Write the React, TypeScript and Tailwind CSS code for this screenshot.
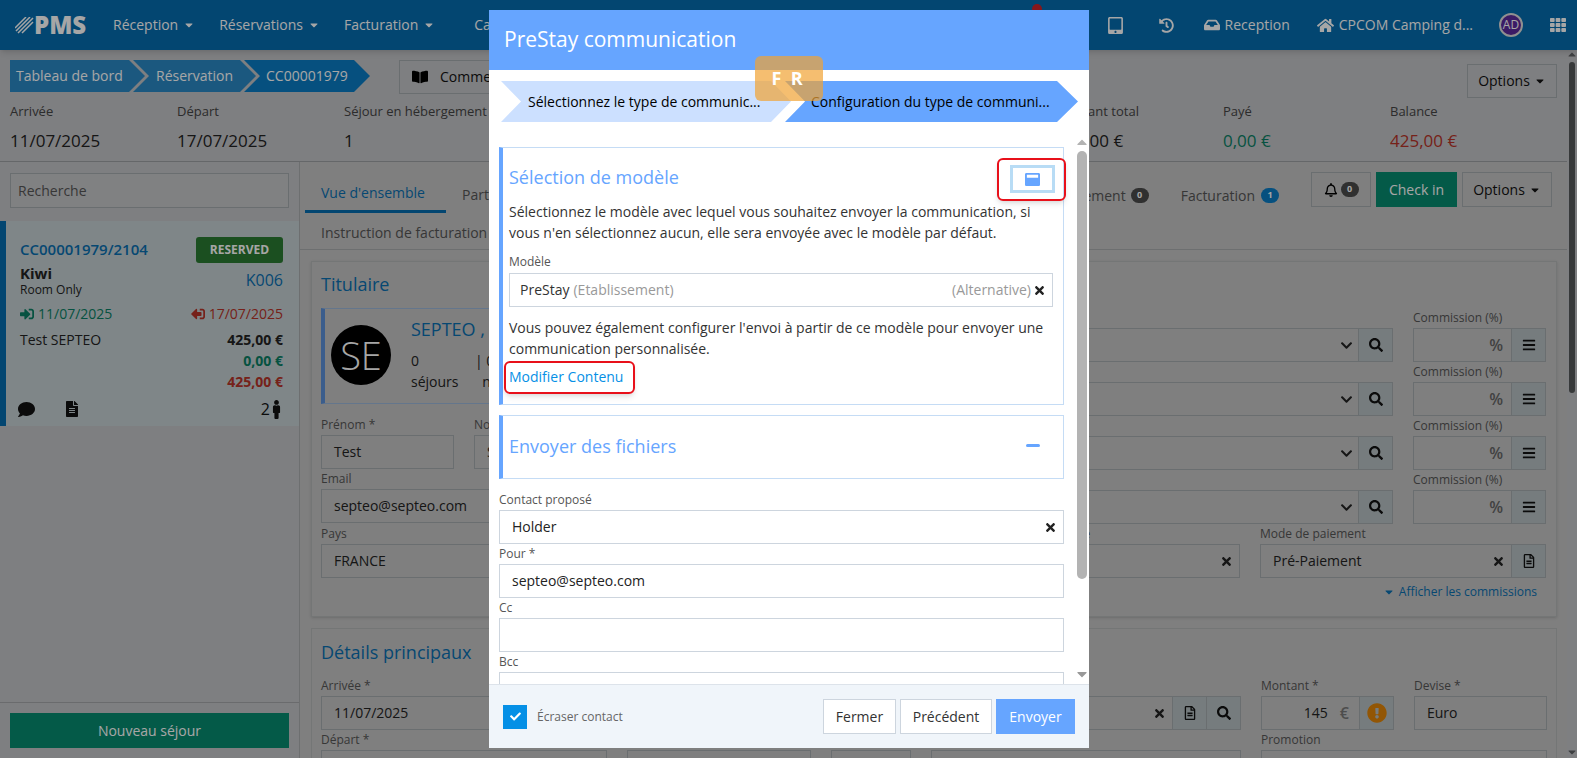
import type { ReactNode } from "react";
import {
  FaBars,
  FaBookOpen,
  FaCaretDown,
  FaCheck,
  FaChevronDown,
  FaComment,
  FaExclamationCircle,
  FaFileAlt,
  FaHistory,
  FaHome,
  FaInbox,
  FaMale,
  FaRegBell,
  FaRegFileAlt,
  FaSearch,
  FaSignInAlt,
  FaSignOutAlt,
  FaTabletAlt,
  FaTh,
  FaTimes,
  FaWindowMaximize,
} from "react-icons/fa";

function Label({ children }: { children: ReactNode }) {
  return <div className="h-5 text-xs leading-5 text-[#555] whitespace-nowrap">{children}</div>;
}

function Box({ children, className = "" }: { children?: ReactNode; className?: string }) {
  return (
    <div className={`h-[34px] border border-[#a3a9ac] flex items-center text-sm text-[#222] pl-3 whitespace-nowrap overflow-hidden ${className}`}>
      {children}
    </div>
  );
}

function Addon({ children }: { children: ReactNode }) {
  return (
    <div className="w-[34px] h-full shrink-0 border-l border-[#a3a9ac] bg-[#b5bfc2] flex items-center justify-center text-[#111] text-sm">
      {children}
    </div>
  );
}

function TopNav() {
  return (
    <header className="h-[50px] shrink-0 bg-[#066cae] text-white flex items-center text-sm shadow-md relative">
      <div className="flex items-center ml-[15px] w-[98px]">
        <svg width="19" height="17" viewBox="0 0 19 17" stroke="white" strokeWidth="1.5">
          <path d="M0 11 L11 0 M1 14 L15 0 M3 16 L18 1 M7 16 L18 5" />
        </svg>
        <span className="text-[24px] leading-none font-extrabold">PMS</span>
      </div>
      {["Réception", "Réservations", "Facturation"].map((item) => (
        <div key={item} className="flex items-center mr-6">
          {item}
          <FaCaretDown className="ml-[5px] text-xs" />
        </div>
      ))}
      <span className="ml-[15px]">Cardex</span>
      <span className="absolute left-[1032px] top-[4px] w-[10px] h-[10px] rounded-full bg-[#d0232a]" />
      <div className="ml-auto flex items-center mr-[11px]">
        <FaTabletAlt className="text-[17px]" />
        <FaHistory className="text-[15px] ml-[35px]" />
        <FaInbox className="text-[16px] ml-[30px] mr-[5px]" />
        <span>Reception</span>
        <FaHome className="text-[17px] ml-[27px] mr-[5px]" />
        <span>CPCOM Camping d...</span>
        <div className="ml-[26px] w-6 h-6 rounded-full bg-[#5b2a9c] border-2 border-[#ddd] flex items-center justify-center text-xs">
          AD
        </div>
        <FaTh className="text-[16px] ml-[27px]" />
      </div>
    </header>
  );
}

function Breadcrumbs() {
  return (
    <div className="flex h-8 text-sm text-white leading-8">
      <div className="w-[135px] pl-[6px] bg-[#2a88c4] [clip-path:polygon(0_0,119px_0,135px_50%,119px_100%,0_100%)]">
        Tableau de bord
      </div>
      <div className="w-[123px] -ml-3 pl-[23px] bg-[#2a88c4] [clip-path:polygon(0_0,107px_0,123px_50%,107px_100%,0_100%,16px_50%)]">
        Réservation
      </div>
      <div className="w-[126px] -ml-3 pl-[22px] bg-[#0a7cc4] [clip-path:polygon(0_0,110px_0,126px_50%,110px_100%,0_100%,16px_50%)]">
        CC00001979
      </div>
    </div>
  );
}

function Stat({ label, value, tone = "text-[#222]" }: { label: string; value: string; tone?: string }) {
  return (
    <div className="w-[167px]">
      <div className="text-[13px] leading-5 text-[#444]">{label}</div>
      <div className={`text-[17px] leading-6 mt-2 ${tone}`}>{value}</div>
    </div>
  );
}

function Summary() {
  return (
    <div className="shrink-0 h-[112px] border-b border-[#9b9ea1] pt-[10px] px-[10px]">
      <div className="flex items-start">
        <Breadcrumbs />
        <div className="ml-[29px] h-[34px] w-[200px] border border-[#a3a9ac] flex items-center pl-3 text-sm text-[#111]">
          <FaBookOpen className="mr-3 text-black text-base" />
          Commentaires
        </div>
        <div className="ml-auto mt-1 h-[34px] w-[90px] border border-[#a3a9ac] flex items-center justify-center text-sm text-[#111]">
          Options
          <FaCaretDown className="ml-1 text-xs" />
        </div>
      </div>
      <div className="flex mt-[3px]">
        <Stat label="Arrivée" value="11/07/2025" />
        <Stat label="Départ" value="17/07/2025" />
        <Stat label="Séjour en hébergement" value="1" />
        <div className="flex-1" />
        <Stat label="Montant total" value="425,00 €" />
        <Stat label="Payé" value="0,00 €" tone="text-[#0a7f64]" />
        <Stat label="Balance" value="425,00 €" tone="text-[#b53328]" />
      </div>
    </div>
  );
}

function Sidebar() {
  return (
    <aside className="w-[300px] shrink-0 border-r border-[#a8abad] flex flex-col">
      <div className="px-[10px] pt-[11px] pb-[13px]">
        <div className="h-[35px] border border-[#a3a9ac] bg-[#c5c6c8] flex items-center pl-[7px] text-sm text-[#555]">Recherche</div>
      </div>
      <div className="h-[205px] border-l-[6px] border-[#066cae] bg-[#c3ced1] pl-[14px] pr-4 pt-4 text-sm text-[#222]">
        <div className="flex items-center justify-between">
          <span className="text-[15px] font-semibold text-[#0a6fb0]">CC00001979/2104</span>
          <span className="w-[87px] h-[26px] rounded-[3px] bg-[#2a7a32] text-white font-bold text-xs flex items-center justify-center">
            RESERVED
          </span>
        </div>
        <div className="flex justify-between items-start">
          <div>
            <div className="text-[15px] font-bold leading-5">Kiwi</div>
            <div className="text-xs leading-[14px]">Room Only</div>
          </div>
          <span className="text-base text-[#0a6fb0] mt-[5px]">K006</span>
        </div>
        <div className="flex justify-between mt-[7px] leading-5">
          <span className="flex items-center text-[#0a7f64]">
            <FaSignInAlt className="mr-1" />
            11/07/2025
          </span>
          <span className="flex items-center text-[#b53328]">
            <FaSignOutAlt className="mr-1 -scale-x-100" />
            17/07/2025
          </span>
        </div>
        <div className="flex justify-between mt-[5px]">
          <span className="leading-[21px]">Test SEPTEO</span>
          <div className="text-right font-bold leading-[21px]">
            <div>425,00 €</div>
            <div className="text-[#0a7f64]">0,00 €</div>
            <div className="text-[#b53328]">425,00 €</div>
          </div>
        </div>
        <div className="flex items-center mt-[5px] -ml-[2px] text-[#111]">
          <FaComment className="text-[17px]" />
          <FaFileAlt className="text-[16px] ml-[29px]" />
          <span className="ml-auto text-base mr-[-2px]">2</span>
          <FaMale className="text-[19px] -mr-[3px] -ml-[1px]" />
        </div>
      </div>
      <div className="mt-auto border-t border-[#a3a5a8] px-[10px] pt-[10px] pb-[10px]">
        <div className="h-[35px] bg-[#078a6f] text-white text-sm flex items-center justify-center">Nouveau séjour</div>
      </div>
    </aside>
  );
}

function Badge({ n, tone }: { n: string; tone: string }) {
  return <span className={`w-[18px] h-[15px] rounded-full text-white text-[9px] font-bold flex items-center justify-center ${tone}`}>{n}</span>;
}

function Tabs() {
  return (
    <div className="h-[88px] shrink-0 border-b border-[#a8abad] relative text-sm text-[#555]">
      <div className="flex items-center pt-[9px] pl-[5px] h-[51px]">
        <div className="w-[141px] h-[42px] flex items-center pl-4 pt-[5px] border-b-[3px] border-[#066cae] text-[#0a6fb0]">Vue d'ensemble</div>
        <span className="ml-4 pt-[5px]">Participants</span>
      </div>
      <div className="pl-[21px] pt-[2px] leading-[36px]">Instruction de facturation</div>
      <div className="absolute top-[10px] right-[15px] flex items-start">
        <div className="flex items-center h-[47px]">
          <span>Paiement</span>
          <span className="ml-[5px]">
            <Badge n="0" tone="bg-[#4a4a4a]" />
          </span>
          <span className="ml-8">Facturation</span>
          <span className="ml-[6px]">
            <Badge n="1" tone="bg-[#0a7cc4]" />
          </span>
        </div>
        <div className="ml-8 w-[60px] h-[35px] border border-[#a3a9ac] flex items-center justify-center text-black">
          <FaRegBell />
          <span className="ml-[3px]">
            <Badge n="0" tone="bg-[#4a4a4a]" />
          </span>
        </div>
        <div className="ml-[5px] w-[81px] h-[35px] bg-[#078a6f] text-white flex items-center justify-center">Check in</div>
        <div className="ml-[5px] w-[90px] h-[35px] border border-[#a3a9ac] flex items-center justify-center text-[#111]">
          Options
          <FaCaretDown className="ml-1 text-xs" />
        </div>
      </div>
    </div>
  );
}

function ChannelRow() {
  return (
    <div className="flex gap-5">
      <div className="flex-1">
        <Label>Canal</Label>
        <Box className="justify-end">
          <FaChevronDown className="text-[13px] mr-[5px] text-[#222]" />
          <Addon>
            <FaSearch />
          </Addon>
        </Box>
      </div>
      <div className="w-[133px]">
        <Label>Commission (%)</Label>
        <Box className="justify-end">
          <span className="mr-2 text-base font-semibold text-[#666]">%</span>
          <Addon>
            <FaBars />
          </Addon>
        </Box>
      </div>
    </div>
  );
}

function HolderCard() {
  return (
    <section className="ml-[11px] mr-[10px] mt-[11px] border border-[#b3b5b6] shadow-sm flex shrink-0 h-[356px] px-[9px] pt-[10px]">
      <div className="w-[709px] shrink-0">
        <h2 className="text-lg leading-6 text-[#0a6fb0]">Titulaire</h2>
        <div className="mt-3 h-[96px] border border-[#9ab5d8] border-l-4 border-l-[#5b8fd8] flex items-center pl-[6px]">
          <div className="w-[60px] h-[60px] -mt-[2px] rounded-full bg-black text-white flex items-center justify-center text-[38px] font-light">SE</div>
          <div className="ml-5 pb-1 text-sm text-[#222]">
            <div className="text-lg leading-6 text-[#0a6fb0] mb-[9px]">SEPTEO , Test</div>
            <div className="flex leading-[21px]">
              <div className="w-[64px]">
                0<br />séjours
              </div>
              <div>
                | 0<br />&nbsp;&nbsp;nuits
              </div>
            </div>
          </div>
        </div>
        <div className="flex gap-5 mt-[11px]">
          <div className="w-[133px]">
            <Label>Prénom *</Label>
            <Box>Test</Box>
          </div>
          <div className="flex-1">
            <Label>Nom *</Label>
            <Box>SEPTEO</Box>
          </div>
        </div>
        <Label>Email</Label>
        <Box>septeo@septeo.com</Box>
        <div className="mt-[1px]">
          <Label>Pays</Label>
        </div>
        <Box>FRANCE</Box>
      </div>
      <div className="flex-1 ml-5 mt-[36px] mr-[1px]">
        <ChannelRow />
        <ChannelRow />
        <ChannelRow />
        <ChannelRow />
        <div className="flex gap-5">
          <div className="flex-1">
            <Label>Société</Label>
            <Box className="justify-end pr-[6px]">
              <FaTimes className="text-[13px]" />
            </Box>
          </div>
          <div className="w-[286px]">
            <Label>Mode de paiement</Label>
            <Box>
              Pré-Paiement
              <FaTimes className="ml-auto mr-[6px] text-[13px]" />
              <Addon>
                <FaRegFileAlt />
              </Addon>
            </Box>
          </div>
        </div>
        <div className="flex items-center justify-end text-xs text-[#0a6fb0] mt-[6px] mr-[9px]">
          <FaCaretDown className="mr-1" />
          Afficher les commissions
        </div>
      </div>
    </section>
  );
}

function DetailsCard() {
  return (
    <section className="ml-[11px] mr-[10px] mt-[11px] border border-[#b3b5b6] px-[9px] pt-[11px] shrink-0">
      <h2 className="text-lg leading-6 text-[#0a6fb0]">Détails principaux</h2>
      <div className="flex gap-5 mt-3">
        <div className="w-[286px]">
          <Label>Arrivée *</Label>
          <Box>11/07/2025</Box>
        </div>
        <div className="flex-1">
          <Label>Agent</Label>
          <Box className="justify-end">
            <FaTimes className="mr-[6px] text-[13px]" />
            <Addon>
              <FaRegFileAlt />
            </Addon>
            <Addon>
              <FaSearch />
            </Addon>
          </Box>
        </div>
        <div className="w-[133px]">
          <Label>Montant *</Label>
          <Box className="justify-end">
            145
            <span className="ml-3 mr-[10px] text-base font-semibold text-[#777]">€</span>
            <Addon>
              <FaExclamationCircle className="text-[#e08508] text-xl" />
            </Addon>
          </Box>
        </div>
        <div className="w-[133px]">
          <Label>Devise *</Label>
          <Box>Euro</Box>
        </div>
      </div>
      <div className="flex gap-5">
        <div className="w-[286px]">
          <Label>Départ *</Label>
          <Box />
        </div>
        <div className="w-[184px]">
          <Label>Nuits</Label>
          <Box />
        </div>
        <div className="w-[80px]">
          <Label>Adultes</Label>
          <Box />
        </div>
        <div className="flex-1">
          <Label>Source</Label>
          <Box />
        </div>
        <div className="w-[286px]">
          <Label>Promotion</Label>
          <Box />
        </div>
      </div>
    </section>
  );
}

function PageScrollbar() {
  return (
    <div className="w-[10px] shrink-0 flex flex-col items-center relative">
      <FaCaretDown className="text-[#5f6164] text-xs rotate-180 -mt-[1px]" />
      <div className="w-[6px] h-[331px] mt-[1px] rounded-full bg-[#55585a]" />
      <FaCaretDown className="text-[#5f6164] text-xs mt-auto" />
    </div>
  );
}

function ModalField({ label, children }: { label: string; children?: ReactNode }) {
  return (
    <>
      <div className="h-5 text-xs leading-5 text-[#555]">{label}</div>
      <div className="h-[34px] border border-[#cdd5de] bg-white flex items-center pl-3 pr-[6px] text-sm text-[#222]">{children}</div>
    </>
  );
}

function Modal() {
  return (
    <div className="fixed left-[489px] top-[10px] w-[600px] h-[738px] bg-white flex flex-col text-sm text-[#333]">
      <div className="h-[60px] shrink-0 bg-[#66a5ff] flex items-center pl-[15px] pb-[2px] text-[21px] text-white">PreStay communication</div>
      <div className="h-[63px] shrink-0 relative pt-[11px] pl-3 flex">
        <div className="w-[290px] h-[41px] bg-[#cce0ff] text-black flex items-center pl-[27px] [clip-path:polygon(0_0,270px_0,290px_50%,270px_100%,0_100%,20px_50%)]">
          Sélectionnez le type de communic...
        </div>
        <div className="w-[293px] h-[41px] -ml-[6px] bg-[#66a5ff] text-black flex items-center pl-[26px] [clip-path:polygon(0_0,272px_0,293px_50%,272px_100%,0_100%,20px_50%)]">
          Configuration du type de communi...
        </div>
      </div>
      <div className="flex-1 min-h-0 flex">
        <div className="w-[575px] pl-[10px] pt-[14px] overflow-hidden">
          <div className="border border-[#c5dcf5] border-l-4 border-l-[#66a5ff] h-[258px] pl-[6px] pr-[10px] pt-[17px]">
            <div className="flex items-center justify-between h-[28px]">
              <h3 className="text-lg text-[#66a5ff] -mt-[4px]">Sélection de modèle</h3>
              <div className="w-[45px] h-[28px] -mr-[2px] border-[3px] border-[#b8dcf5] flex items-center justify-center">
                <FaWindowMaximize className="text-[#66a5ff] text-[15px]" />
              </div>
            </div>
            <p className="mt-2 leading-[21px]">
              Sélectionnez le modèle avec lequel vous souhaitez envoyer la communication, si vous n'en sélectionnez aucun, elle sera envoyée avec le modèle par défaut.
            </p>
            <div className="h-[21px] mt-[9px] text-xs leading-5 text-[#555]">Modèle</div>
            <div className="h-[34px] border border-[#cdd5de] flex items-center pl-[10px] pr-[6px]">
              PreStay
              <span className="ml-1 text-[#999]">(Etablissement)</span>
              <span className="ml-auto text-[#999]">(Alternative)</span>
              <FaTimes className="ml-[2px] text-[13px] text-[#222]" />
            </div>
            <p className="mt-[10px] leading-[21px]">
              Vous pouvez également configurer l'envoi à partir de ce modèle pour envoyer une communication personnalisée.
            </p>
            <div className="mt-[7px] leading-[21px] text-[#0590e6]">Modifier Contenu</div>
          </div>
          <div className="mt-[10px] mb-[11px] border border-[#c5dcf5] border-l-4 border-l-[#66a5ff] h-[64px] pl-[6px] pr-[23px] flex items-center justify-between">
            <h3 className="text-lg text-[#66a5ff] -mt-[3px]">Envoyer des fichiers</h3>
            <span className="w-[14px] h-[3px] rounded-sm bg-[#66a5ff] -mt-[4px]" />
          </div>
          <ModalField label="Contact proposé">
            Holder
            <FaTimes className="ml-auto text-[13px] text-[#222]" />
          </ModalField>
          <ModalField label="Pour *">septeo@septeo.com</ModalField>
          <ModalField label="Cc" />
          <ModalField label="Bcc" />
        </div>
        <div className="ml-[13px] w-[10px] flex flex-col items-center pt-[2px] pb-[2px]">
          <FaCaretDown className="text-[#b3b3b3] text-base rotate-180" />
          <div className="w-[10px] h-[428px] rounded-md bg-[#b3b3b3]" />
          <FaCaretDown className="text-[#999] text-base mt-auto" />
        </div>
      </div>
      <div className="h-[64px] shrink-0 bg-[#f0f5fa] border-t border-[#dde3ea] flex items-center pl-[14px] pr-[14px]">
        <div className="w-6 h-6 bg-[#0590e6] flex items-center justify-center text-white">
          <FaCheck className="text-[11px]" />
        </div>
        <span className="ml-[10px] text-xs text-[#666]">Écraser contact</span>
        <div className="ml-auto w-[73px] h-[35px] border border-[#cdd5de] bg-white flex items-center justify-center">Fermer</div>
        <div className="ml-1 w-[92px] h-[35px] border border-[#cdd5de] bg-white flex items-center justify-center">Précédent</div>
        <div className="ml-1 w-[79px] h-[35px] bg-[#66a5ff] text-white flex items-center justify-center">Envoyer</div>
      </div>
      {/* language tag and the red annotations lie over the dialog */}
      <div className="absolute left-[266px] top-[46px] w-[68px] h-[45px] pb-[2px] pr-1 rounded-md bg-[#f1a233]/70 text-white font-bold text-lg flex items-center justify-center">
        F&nbsp;&nbsp;R
      </div>
      <div className="absolute left-[508px] top-[148px] w-[69px] h-[43px] rounded-md border-2 border-[#e8101a] shadow-md" />
      <div className="absolute left-[15px] top-[351px] w-[131px] h-[33px] rounded-md border-2 border-[#e8101a] shadow-md" />
    </div>
  );
}

export default function App() {
  return (
    <div className="h-screen overflow-hidden flex flex-col bg-[#c2c3c6] font-['Open_Sans',sans-serif] relative">
      <TopNav />
      <div className="flex-1 min-h-0 flex">
        <div className="flex-1 min-w-0 flex flex-col">
          <Summary />
          <div className="flex-1 min-h-0 flex">
            <Sidebar />
            <main className="flex-1 min-w-0 bg-[#c3c3c3] flex flex-col overflow-hidden">
              <Tabs />
              <HolderCard />
              <DetailsCard />
            </main>
          </div>
        </div>
        <PageScrollbar />
      </div>
      <div className="fixed inset-0 bg-[rgba(0,0,0,0.35)]" />
      <Modal />
    </div>
  );
}
